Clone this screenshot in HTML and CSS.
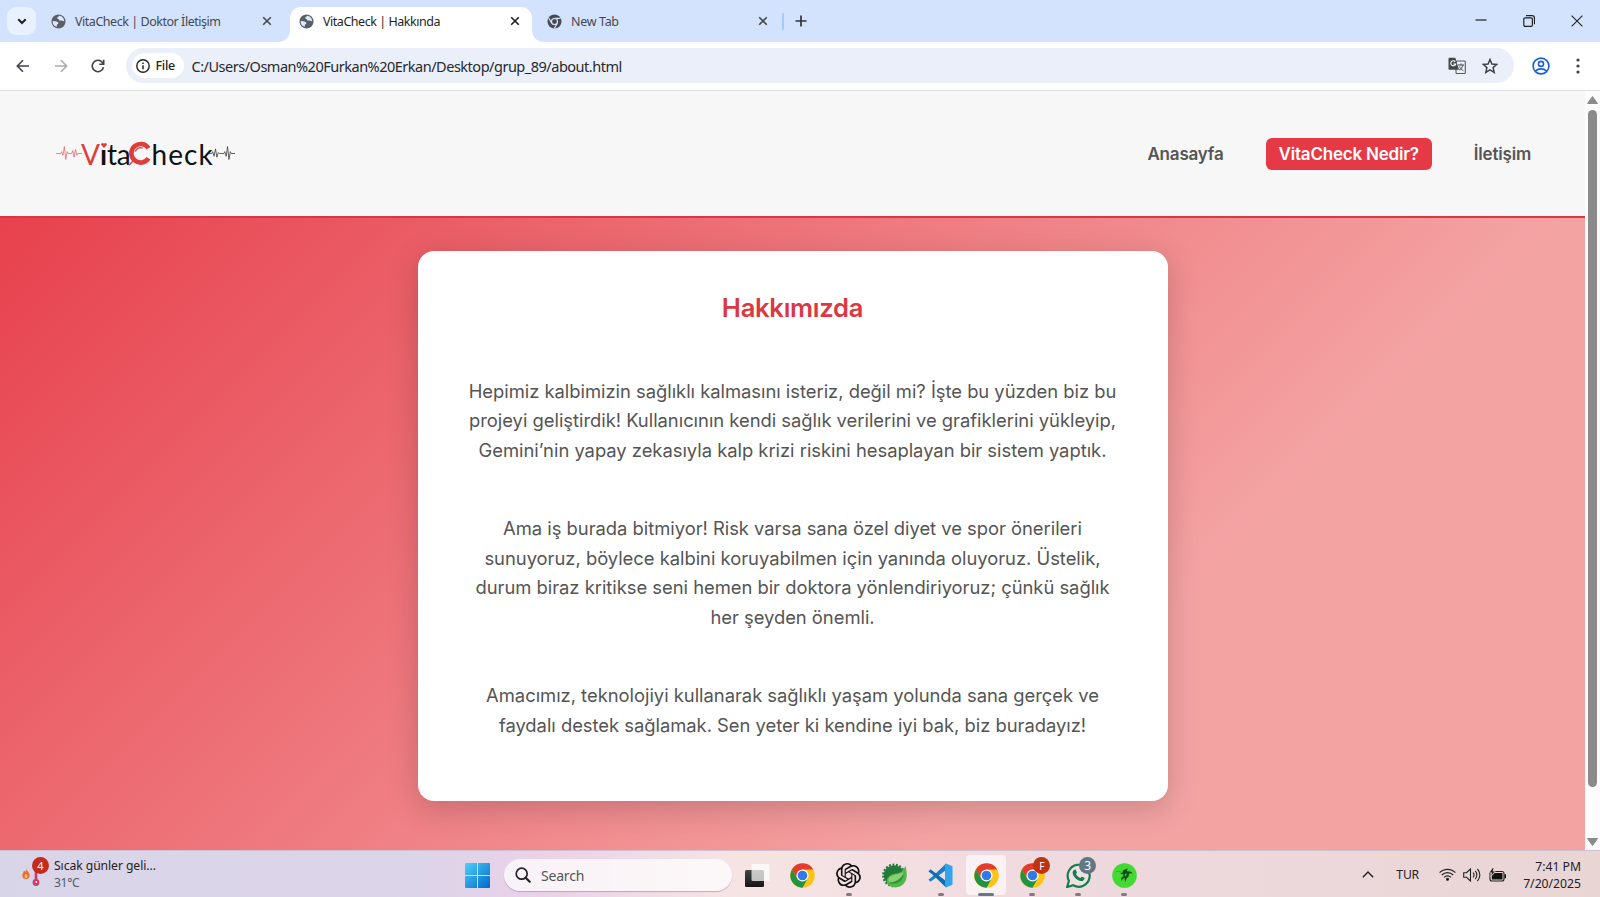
FILE: index.html
```html
<!DOCTYPE html>
<html lang="tr">
<head>
<meta charset="utf-8">
<title>VitaCheck | Hakkında</title>
<link rel="stylesheet" href="styles.css">
</head>
<body>
<svg width="0" height="0" class="defs">
  <defs>
    <linearGradient id="win" x1="0" y1="0" x2="1" y2="1"><stop offset="0" stop-color="#4fd0fb"/><stop offset="1" stop-color="#0067c8"/></linearGradient>
    <linearGradient id="dark" x1="0" y1="0" x2="0" y2="1"><stop offset="0" stop-color="#444"/><stop offset="1" stop-color="#151515"/></linearGradient>
    <symbol id="globe" viewBox="0 0 16 16"><circle cx="8" cy="8" r="7.500" fill="#5b6066"/><path d="M1.800 7.400c2.300.3 4.400.2 5.600 1.300.9.8.3 1.800-.6 2.100-.7.200-.3 1.900-.9 2.900C3.200 13 1.400 10.500 1.800 7.400zM8.700 1.800c-.4 1.600-2.300 1-2.100 2.500.1 1 1.400.6 1.800 1.500.5 1.200 1.300 1.600 2.300 1.200.9-.4 1.500.6 3.300.7C14.200 4.500 11.600 2 8.700 1.800z" fill="#dce8fc"/></symbol>
    <symbol id="x" viewBox="0 0 10 10"><path d="M1.200 1.200l7.600 7.600M8.800 1.200L1.200 8.800" stroke="currentColor" stroke-width="1.600" fill="none"/></symbol>
    <symbol id="chrome" viewBox="0 0 48 48"><circle cx="24" cy="24" r="23.500" fill="#fbc417"/><path d="M24 12.500H44.500A23.500 23.500 0 0 0 3.650 12.250L14 29.700 24 24z" fill="#e33b2e"/><path d="M3.650 12.250A23.500 23.500 0 0 0 24 47.500L34 29.700 24 24 14 29.700z" fill="#229342"/><circle cx="24" cy="24" r="11.600" fill="#fff"/><circle cx="24" cy="24" r="9.200" fill="#3178e8"/></symbol>
  </defs>
</svg>

<div class="tabstrip">
  <div class="tabsearch"><svg width="10" height="7" viewBox="0 0 10 7"><path d="M1.300 1.300L5 5l3.700-3.700" fill="none" stroke="#1f1f1f" stroke-width="2"/></svg></div>
  <div class="tab tab-first"><svg class="fav"><use href="#globe"/></svg><span class="tab-title">VitaCheck | Doktor İletişim</span><svg class="close"><use href="#x"/></svg></div>
  <div class="tab active"><svg class="fav"><use href="#globe"/></svg><span class="tab-title">VitaCheck | Hakkında</span><svg class="close"><use href="#x"/></svg></div>
  <div class="tab tab-new"><svg class="fav" viewBox="0 0 16 16"><circle cx="8" cy="8" r="7.500" fill="#474c52"/><circle cx="8" cy="8" r="3.200" fill="none" stroke="#d3e2fd" stroke-width="1.300"/><path d="M8 4.600h6.500M5 9.800L1.900 4.400M11 9.800l-3.200 5.500" stroke="#d3e2fd" stroke-width="1.200"/></svg><span class="tab-title">New Tab</span><svg class="close"><use href="#x"/></svg></div>
  <span class="divider"></span>
  <svg class="plus" width="12" height="12" viewBox="0 0 12 12"><path d="M6 .5v11M.5 6h11" stroke="#333" stroke-width="1.700"/></svg>
  <div class="window-buttons">
    <svg width="12" height="12" viewBox="0 0 12 12"><path d="M.5 5h11" stroke="#222" stroke-width="1.200"/></svg>
    <svg width="12" height="12" viewBox="0 0 12 12" fill="none" stroke="#222" stroke-width="1.200"><rect x=".8" y="2.800" width="8.600" height="8.600" rx="1.300"/><path d="M3 .7h6.300a2.200 2.200 0 0 1 2.200 2.200v6.300"/></svg>
    <svg width="12" height="12" viewBox="0 0 12 12"><path d="M.6.6l10.800 10.800M11.400.6L.6 11.400" stroke="#222" stroke-width="1.100"/></svg>
  </div>
</div>

<div class="toolbar">
  <svg class="nav-icon" viewBox="0 0 14 14"><path d="M13 7H1.600M7 1.300L1.300 7 7 12.700" fill="none" stroke="#3f4247" stroke-width="1.600"/></svg>
  <svg class="nav-icon" viewBox="0 0 14 14"><path d="M1 7h11.400M7 1.300L12.700 7 7 12.700" fill="none" stroke="#a8aaae" stroke-width="1.600"/></svg>
  <svg class="nav-icon" viewBox="0 0 14 14"><path d="M12.500 8.300A5.700 5.700 0 1 1 11.400 3.400L12.700 5M12.700.8v4.400H8.300" fill="none" stroke="#3f4247" stroke-width="1.600"/></svg>
  <div class="omnibox">
    <div class="chip"><svg width="14" height="14" viewBox="0 0 14 14"><circle cx="7" cy="7" r="6.200" fill="none" stroke="#222" stroke-width="1.400"/><path d="M7 6.200v4M7 3.500v1.500" stroke="#222" stroke-width="1.500"/></svg><span>File</span></div>
    <span class="url">C:/Users/Osman%20Furkan%20Erkan/Desktop/grup_89/about.html</span>
    <svg class="translate" width="18" height="18" viewBox="0 0 18 18"><rect x="8" y="4" width="9.300" height="12.500" rx="1" fill="#edf1fa" stroke="#55585c" stroke-width="1.100"/><path d="M1.500.8h5.800l3.700 12H1.500a1 1 0 0 1-1-1v-10a1 1 0 0 1 1-1z" fill="#45484c"/><path d="M7.300 4.800A2.500 2.500 0 1 0 7.700 7H5.300" stroke="#fff" stroke-width="1.100" fill="none"/><path d="M10 8h6M13 6.500V8M15 8c-.6 2.600-2 4-4 5.200M11.500 9.500c.7 1.800 2 3 3.800 4.200" stroke="#45484c" fill="none"/></svg>
    <svg class="star" width="16" height="16" viewBox="0 0 16 16"><path d="M8 1.500l1.900 4.500 4.900.4-3.700 3.200 1.100 4.800L8 11.900l-4.200 2.500 1.100-4.800L1.200 6.400 6.100 6z" fill="none" stroke="#3f4247" stroke-width="1.500"/></svg>
  </div>
  <svg class="profile" width="18" height="18" viewBox="0 0 18 18" fill="none" stroke="#1b5fd0" stroke-width="1.600"><circle cx="9" cy="9" r="7.900"/><circle cx="9" cy="6.900" r="2.500"/><path d="M3.300 14.100c3.200-3 8.200-3 11.400 0"/></svg>
  <svg class="kebab" width="4" height="16" viewBox="0 0 4 16" fill="#3f4247"><circle cx="2" cy="2" r="1.600"/><circle cx="2" cy="8" r="1.600"/><circle cx="2" cy="14" r="1.600"/></svg>
</div>

<div class="viewport">
  <div class="page">
    <header class="site-header">
      <div class="logo">
        <svg class="pulse pulse-left" viewBox="0 0 28 18"><path d="M0 9h5l1-2 1.500 4L9 1.500l1.500 14L12 7l1 2h4l1-3 1.500 7L21 4.500 22.500 11l1-2H28" fill="none" stroke="#e0645f" stroke-width=".8"/></svg>
        <span class="logo-v">V</span><span class="logo-i">ı<svg class="heart" viewBox="0 0 6 5"><path d="M3 5L.4 2.300A1.400 1.400 0 0 1 3 .9a1.400 1.400 0 0 1 2.600 1.400z" fill="#e03d3d"/></svg></span><span class="logo-ta">ta</span>
        <svg class="logo-c" viewBox="0 0 24 26"><path d="M20.500 7.300A9.300 9.300 0 1 0 20.500 17.300" fill="none" stroke="#e03d3d" stroke-width="4.600"/><path d="M7.300 10.500c1-3.300 4.500-4.600 7.500-3.400M6.500 18.300L1 24.300" fill="none" stroke="#e03d3d" stroke-width="1.300"/></svg>
        <span class="logo-heck">heck</span>
        <svg class="pulse pulse-right" viewBox="0 0 28 18"><path d="M0 9h3l1-2 1.500 5L7 4l1.500 9L10 8l1 1h5l1-2 1.500 5L20 1.500l1.500 14L23 7l1 2h4" fill="none" stroke="#444" stroke-width=".9"/></svg>
      </div>
      <nav class="site-nav"><a>Anasayfa</a><a class="current">VitaCheck Nedir?</a><a>İletişim</a></nav>
    </header>
    <main class="content">
      <section class="card">
        <h2>Hakkımızda</h2>
        <p>Hepimiz kalbimizin sağlıklı kalmasını isteriz, değil mi? İşte bu yüzden biz bu<br>projeyi geliştirdik! Kullanıcının kendi sağlık verilerini ve grafiklerini yükleyip,<br>Gemini’nin yapay zekasıyla kalp krizi riskini hesaplayan bir sistem yaptık.</p>
        <p>Ama iş burada bitmiyor! Risk varsa sana özel diyet ve spor önerileri<br>sunuyoruz, böylece kalbini koruyabilmen için yanında oluyoruz. Üstelik,<br>durum biraz kritikse seni hemen bir doktora yönlendiriyoruz; çünkü sağlık<br>her şeyden önemli.</p>
        <p>Amacımız, teknolojiyi kullanarak sağlıklı yaşam yolunda sana gerçek ve<br>faydalı destek sağlamak. Sen yeter ki kendine iyi bak, biz buradayız!</p>
      </section>
    </main>
  </div>
  <div class="scrollbar">
    <svg width="11" height="8" viewBox="0 0 11 8"><path d="M5.500.5L10.500 7.500H.5z" fill="#8b8b8b" stroke="#8b8b8b" stroke-linejoin="round"/></svg>
    <div class="thumb"></div>
    <svg width="11" height="8" viewBox="0 0 11 8"><path d="M5.500 7.500L.5.500h10z" fill="#8b8b8b" stroke="#8b8b8b" stroke-linejoin="round"/></svg>
  </div>
</div>

<footer class="taskbar">
  <div class="weather">
    <div class="weather-icon">
      <svg width="28" height="28" viewBox="0 0 28 28"><path d="M5 8.500c0 2 3.700 3.300 3.700 6.800A3.700 3.700 0 0 1 5 19a3.700 3.700 0 0 1-3.700-3.500c0-2 1.500-2.600 1.400-4.500 1.200 0 1.500.5 1.700 1C4.900 11 5.200 9.500 5 8.500z" fill="#ef6b36"/><path d="M5 13.500c.2 1 1.700 1.600 1.600 3A1.600 1.600 0 0 1 5 18c-1.900-.3-1.800-2.500 0-4.500z" fill="#ffc04d"/><path d="M12.500 7h5v12a5 5 0 1 1-5 0z" fill="#c9daf5"/><path d="M15 9v13" stroke="#dc3560" stroke-width="2.600"/><circle cx="15" cy="22.500" r="3.400" fill="#dc3560"/><circle cx="15.300" cy="22" r="1" fill="#fff"/></svg>
      <span class="badge badge-weather">4</span>
    </div>
    <div class="weather-text"><span>Sıcak günler geli...</span><span class="temp">31°C</span></div>
  </div>
  <div class="dock">
    <svg class="start" width="25" height="25" viewBox="0 0 25 25" fill="url(#win)"><path d="M1 0h11v12H0V1a1 1 0 0 1 1-1zM13 0h11a1 1 0 0 1 1 1v11H13zM0 13h12v12H1a1 1 0 0 1-1-1zM13 13h12v11a1 1 0 0 1-1 1H13z"/></svg>
    <div class="search"><svg width="16" height="16" viewBox="0 0 16 16"><circle cx="6.700" cy="6.700" r="5.500" fill="none" stroke="#222" stroke-width="1.700"/><path d="M10.700 10.700l4 4" stroke="#222" stroke-width="2.200" stroke-linecap="round"/></svg><span>Search</span></div>
    <div class="apps">
      <div class="app"><svg viewBox="0 0 25 25"><rect x="0" y="7" width="19" height="17" rx="1.500" fill="url(#dark)"/><rect x="6.500" y="1" width="18" height="17" rx="1.500" fill="#fff" fill-opacity=".72"/></svg></div>
      <div class="app"><svg><use href="#chrome"/></svg></div>
      <div class="app run"><svg viewBox="0 0 24 24"><path fill="#111" d="M22.282 9.821a5.985 5.985 0 0 0-.516-4.911 6.046 6.046 0 0 0-6.510-2.900A6.065 6.065 0 0 0 4.981 4.182a5.985 5.985 0 0 0-3.998 2.900 6.046 6.046 0 0 0 .743 7.097 5.980 5.980 0 0 0 .511 4.911 6.051 6.051 0 0 0 6.515 2.900A5.985 5.985 0 0 0 13.260 24a6.056 6.056 0 0 0 5.772-4.206 5.990 5.990 0 0 0 3.998-2.900 6.056 6.056 0 0 0-.748-7.073zM13.260 22.430a4.476 4.476 0 0 1-2.876-1.041l.142-.080 4.778-2.758a.795.795 0 0 0 .393-.681v-6.737l2.020 1.169a.071.071 0 0 1 .038.052v5.583a4.504 4.504 0 0 1-4.495 4.493zM3.600 18.304a4.471 4.471 0 0 1-.535-3.014l.142.085 4.783 2.758a.771.771 0 0 0 .781 0l5.843-3.369v2.333a.080.080 0 0 1-.033.061L9.740 19.950a4.499 4.499 0 0 1-6.140-1.646zM2.341 7.896a4.485 4.485 0 0 1 2.366-1.973V11.600a.766.766 0 0 0 .388.677l5.814 3.354-2.020 1.169a.076.076 0 0 1-.071 0L3.987 14.010A4.504 4.504 0 0 1 2.341 7.896zm16.597 3.855l-5.833-3.387L15.119 7.200a.076.076 0 0 1 .071 0l4.830 2.791a4.494 4.494 0 0 1-.676 8.104v-5.677a.790.790 0 0 0-.407-.667zm2.011-3.023l-.142-.085-4.774-2.782a.776.776 0 0 0-.785 0L9.409 9.230V6.897a.066.066 0 0 1 .028-.061l4.830-2.787a4.499 4.499 0 0 1 6.681 4.660zM8.307 12.863l-2.020-1.164a.080.080 0 0 1-.038-.057V6.075a4.499 4.499 0 0 1 7.375-3.453l-.142.080L8.704 5.460a.795.795 0 0 0-.393.681zm1.097-2.365l2.602-1.500 2.607 1.500v2.999l-2.597 1.500-2.607-1.500z"/></svg></div>
      <div class="app"><svg viewBox="0 0 25 25"><circle cx="12" cy="12.500" r="10.300" fill="#247a3c"/><circle cx="12" cy="12.500" r="10.800" fill="none" stroke="#247a3c" stroke-width="2.200" stroke-dasharray="1.900 1.600"/><path d="M23.500 2.500c1.500 7 2.500 14-2 18.500C17 25.500 9.500 25 6 21.500 2.500 17 7 11.500 14 10.500c5-.7 8-3 9.500-8z" fill="#53b848"/><path d="M22 9.500c0 6-5 9.500-15 9.500-2.500-7 7-7.500 15-9.500z" fill="#86d16e"/><path d="M6 20c7-.5 13-3.500 16-10.500-.5 8.500-6 13-16 10.500z" fill="#2f9440"/></svg></div>
      <div class="app run"><svg viewBox="0 0 25 25"><path d="M18 .5L4.500 13.500.5 16.500l2 2.200L18 7z" fill="#197fca"/><path d="M18 24.500L4.500 11.500.5 8.500l2-2.200L18 18z" fill="#086eb5"/><path d="M18 .5l6.500 2.800v18.400L18 24.500l-1-1V1.500z" fill="#31a4ec"/></svg></div>
      <div class="app run current-app"><svg><use href="#chrome"/></svg></div>
      <div class="app run"><svg><use href="#chrome"/></svg><span class="badge badge-profile">F</span></div>
      <div class="app run"><svg viewBox="0 0 25 25"><path d="M1.200 24l1.700-6.200A11 11 0 1 1 7.200 22.300z" fill="#eee1e2" stroke="#187b51" stroke-width="2.200"/><path d="M8 7c1-.9 1.700-.6 2 .2l.8 2c.2.600-.2 1-.8 1.700 1 2 2.400 3.200 4.400 4.100.8-.8 1.100-1.600 1.700-1.300l2.200 1.100c1 .5-.5 3.200-2.400 3.300C11.500 18.300 6.700 13.500 6.700 9.700 6.700 8.500 7.300 7.600 8 7z" fill="#187b51"/></svg><span class="badge badge-count">3</span></div>
      <div class="app run"><svg viewBox="0 0 25 25"><circle cx="12.500" cy="12.500" r="12.300" fill="#43d832"/><path d="M4 8.500c3-.5 5 .5 6.500 1.200C10 7.500 13 6 16.500 5.500c-1.500 1-2 2-1.300 2.800 1.800.2 4.300-.3 5.300 2.700-1.500-1-3-.8-3.700 0 .5 1.500-.3 2.700-1.500 3.700-1.300 1.200-1.800 2.300-1.300 4.300-1.500-1-1.700-2.500-1-4.200-1 .7-2.700.7-3.500 3.200-.9-2.500.2-4.300 2.200-5-.5-.6-.4-1.200 0-1.800-1.400.6-2.700-.2-3.400-1.400 1 .3 1.700.2 2.200-.1C8.500 8.800 6 8.500 4 8.500z" fill="#164f19"/><path d="M12.700 11.300l1.700-.6.300 1.600-1.400.7z" fill="#43d832"/></svg></div>
    </div>
  </div>
  <div class="tray">
    <svg class="chevron" width="12" height="7" viewBox="0 0 12 7"><path d="M.8 6.300L6 1.100l5.200 5.200" fill="none" stroke="#222" stroke-width="1.400"/></svg>
    <span class="lang">TUR</span>
    <svg class="wifi" width="17" height="13" viewBox="0 0 17 13" fill="none" stroke="#222" stroke-width="1.100"><path d="M.6 4.700a11 11 0 0 1 15.800 0M2.800 7a8 8 0 0 1 11.400 0M5 9.300a5 5 0 0 1 7 0"/><circle cx="8.500" cy="11.300" r="1" fill="#222"/></svg>
    <svg class="sound" width="18" height="14" viewBox="0 0 18 14" fill="none" stroke="#222" stroke-width="1.100"><path d="M.7 4.700h2.800L7.500 1v12l-4-3.700H.7zM10 4.700c1.200 1.300 1.200 3.300 0 4.600M12.200 2.900c2.200 2.300 2.200 5.900 0 8.200M14.400 1c3.300 3.400 3.300 8.600 0 12"/></svg>
    <svg class="battery" width="18" height="14" viewBox="0 0 18 14"><rect x="1" y="3.500" width="14" height="9.500" rx="2" fill="none" stroke="#222" stroke-width="1.100"/><path d="M5.500 5h8v6.500H2.800V8z" fill="#111"/><path d="M15.500 6.300h1.500v4h-1.500z" fill="#111"/><path d="M3.500 0L.3 4.700H2.800L1.500 8.500 6.300 3.300H3.900L5 0z" fill="#111" stroke="#e8d5d7" stroke-width=".6"/></svg>
    <div class="clock"><span>7:41 PM</span><span>7/20/2025</span></div>
  </div>
</footer>
</body>
</html>
```
FILE: styles.css
```css
* { box-sizing: border-box; }
html, body { height: 100%; }
body { margin: 0; display: flex; flex-direction: column; overflow: hidden; font-family: "Noto Sans", sans-serif; color: #222; }
.defs { position: absolute; }
svg { flex: none; display: block; }

.tabstrip { height: 42px; flex: none; display: flex; align-items: center; padding-left: 7px; background: #d3e2fd; }
.tabsearch { width: 29px; height: 28px; border-radius: 9px; background: #e9f0fe; display: flex; align-items: center; justify-content: center; }
.tab { display: flex; align-items: center; height: 35px; color: #45494f; }
.tab-first { width: 254px; padding: 0 18px 0 15px; }
.active { width: 242px; padding: 0 12px 7px 9px; margin-top: 7px; height: 35px; background: #fff; border-radius: 11px 11px 0 0; color: #1f1f1f; position: relative; }
.active::before, .active::after { content: ""; position: absolute; bottom: 0; width: 11px; height: 11px; }
.active::before { left: -11px; background: radial-gradient(circle at 0 0, transparent 10.500px, #fff 11px); }
.active::after { right: -11px; background: radial-gradient(circle at 100% 0, transparent 10.500px, #fff 11px); }
.tab-new { width: 250px; padding: 0 14px 0 15px; }
.fav { width: 15px; height: 15px; }
.tab-title { flex: 1; margin-left: 9px; font-size: 12.500px; letter-spacing: -.46px; white-space: nowrap; }
.tab-new .tab-title { letter-spacing: -.33px; }
.close { width: 10px; height: 10px; }
.divider { width: 2px; height: 17px; background: #a8c7fa; border-radius: 1px; }
.plus { margin-left: 11px; }
.window-buttons { margin-left: auto; display: flex; gap: 36px; padding-right: 17px; }

.toolbar { height: 49px; flex: none; display: flex; align-items: center; padding: 0 20px 1px 16px; background: #fff; border-bottom: 1px solid #dfe1e5; }
.nav-icon { width: 14px; height: 14px; margin-right: 23.500px; }
.omnibox { flex: 1; height: 35px; margin-left: -3px; margin-right: 18px; border-radius: 18px; background: #ebeff9; display: flex; align-items: center; padding: 0 16px 0 6px; }
.chip { height: 25px; width: 52px; border-radius: 13px; background: #fff; display: flex; align-items: center; gap: 6px; padding-left: 4px; font-size: 12.500px; font-weight: 500; letter-spacing: -.3px; }
.url { margin-left: 8px; font-size: 14.500px; letter-spacing: -.49px; white-space: nowrap; color: #27292c; }
.translate { margin-left: auto; margin-right: 16px; }
.kebab { margin-left: 26px; }

.viewport { flex: 1; display: flex; min-height: 0; }
.page { flex: 1; display: flex; flex-direction: column; font-family: Inter, sans-serif; background: linear-gradient(135deg, #e63946 0%, #f4a3a3 72%); min-width: 0; }
.site-header { height: 127px; flex: none; display: flex; align-items: center; justify-content: space-between; padding: 0 54px 0 56px; background: #f7f7f7; border-bottom: 2px solid #dc3545; }
.logo { display: flex; align-items: center; height: 40px; font-family: Lato, sans-serif; font-size: 28px; line-height: 40px; color: #111; }
.pulse { width: 26px; height: 17px; }
.pulse-left { margin-right: -1px; }
.pulse-right { margin-left: -5px; }
.logo-v { color: #e03d3d; }
.logo-i { position: relative; font-weight: 700; }
.heart { position: absolute; left: 1px; top: 9px; width: 6px; height: 5px; }
.logo-ta { letter-spacing: -.3px; }
.logo-c { width: 24px; height: 26px; margin: 0 -1px 0 -2px; }
.logo-heck { letter-spacing: 1.100px; }
.site-nav { display: flex; gap: 29px; font-size: 17px; letter-spacing: -.2px; font-weight: 600; line-height: 20px; color: #555; }
.site-nav a { padding: 6px 0; }
.site-nav a:first-child { margin-right: 13px; }
.site-nav a:last-child { margin-left: 13px; }
.site-nav .current { background: #e63946; color: #fff; border-radius: 6px; padding: 6px 13px; }
.content { flex: 1; padding-top: 33px; display: flex; justify-content: center; align-items: flex-start; }
.card { width: 750px; height: 550px; background: #fff; border-radius: 16px; box-shadow: 0 8px 32px rgba(0,0,0,.18); text-align: center; padding-top: 40px; }
.card h2 { margin: 0 0 52px; color: #dc3743; font-size: 25.600px; letter-spacing: -.28px; line-height: 34px; font-weight: 600; }
.card p { margin: 0 0 49px; color: #555; font-size: 18.400px; letter-spacing: -.025px; line-height: 29.440px; white-space: nowrap; }
.scrollbar { width: 15px; background: #fcfcfc; display: flex; flex-direction: column; align-items: center; padding: 5px 0 4px 0; }
.thumb { width: 9px; height: 677px; margin-top: 6px; margin-bottom: auto; background: #8b8b8b; border-radius: 5px; }

.taskbar { height: 47px; flex: none; display: grid; grid-template-columns: 464px 1fr auto; align-items: center; border-top: 1px solid #cfc0cd; background: linear-gradient(90deg, #d9d5e8 0%, #dcd4e8 26%, #ead2e8 34%, #f6e4e4 46%, #f3dfe2 56%, #edd8dd 70%, #ead5d5 100%); }
.weather { display: flex; align-items: center; padding-left: 21px; gap: 5px; }
.weather-icon { position: relative; }
.weather-text { display: flex; flex-direction: column; font-size: 12.200px; line-height: 17px; letter-spacing: -.08px; }
.temp { color: #5b5864; letter-spacing: -.4px; }
.badge { position: absolute; width: 17px; height: 17px; border-radius: 50%; color: #fff; display: flex; align-items: center; justify-content: center; font-size: 11px; }
.badge-weather { left: 11px; top: -3px; background: #c42b1c; }
.dock { display: flex; align-items: center; height: 46px; padding-top: 2px; }
.start { margin-left: 1px; }
.search { width: 228px; height: 32px; margin-left: 14px; border-radius: 16px; background: rgba(255,255,255,.72); box-shadow: 0 1px 1px rgba(110,70,110,.35); display: flex; align-items: center; gap: 10px; padding-left: 11px; font-size: 14px; letter-spacing: -.2px; color: #555; }
.apps { display: flex; margin-left: 5px; gap: 5.900px; }
.app { width: 40px; height: 40px; position: relative; border-radius: 4px; display: flex; align-items: center; justify-content: center; }
.app svg { width: 25px; height: 25px; }
.run::after { content: ""; position: absolute; bottom: -1px; width: 6px; height: 3px; border-radius: 2px; background: #85797e; }
.current-app { background: rgba(255,255,255,.6); }
.current-app::after { width: 16px; background: #637986; }
.badge-profile { right: 2px; top: 2px; background: #bd3210; font-size: 10px; }
.badge-count { right: 2px; top: 2px; background: #617784; font-size: 12px; }
.tray { display: flex; align-items: center; padding: 1px 19px 0 0; font-size: 12.200px; letter-spacing: -.2px; }
.lang { margin-left: 22px; margin-right: 20px; }
.sound { margin: 0 8px 0 7px; }
.clock { width: 74px; display: flex; flex-direction: column; align-items: flex-end; line-height: 17px; letter-spacing: 0; white-space: nowrap; }
```
